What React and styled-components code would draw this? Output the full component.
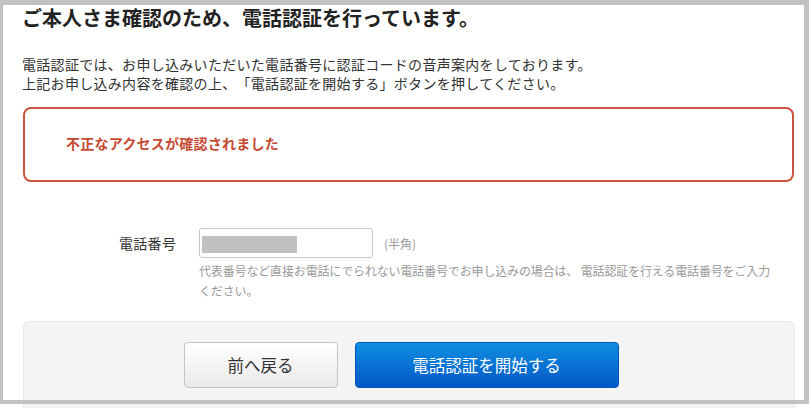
import React from "react";
import styled, { createGlobalStyle } from "styled-components";

const Global = createGlobalStyle`
  html, body { margin: 0; padding: 0; background: #fff; }
  body {
    font-family: "Noto Sans CJK JP", "Noto Sans", sans-serif;
    text-spacing-trim: space-all;
  }
  * { box-sizing: border-box; }
`;

const Page = styled.div`
  position: relative;
  width: 811px;
  height: 408px;
  overflow: hidden;
  background: #fff;
`;

const Frame = styled.div`
  position: absolute;
  left: 0;
  top: 0;
  width: 809px;
  height: 404px;
  border-style: solid;
  border-color: #c2c2c2;
  border-width: 5px 5px 4px 3px;
  pointer-events: none;
`;

const Content = styled.div`
  display: flex;
  flex-direction: column;
  padding: 5px 16px 0 22px;
  color: #333;
`;

const Title = styled.h1`
  margin: 0;
  font-size: 20px;
  line-height: 26px;
  font-weight: 700;
  color: #222;
  white-space: nowrap;
`;

const Lead = styled.p`
  margin: 24px 0 0;
  font-size: 14px;
  line-height: 19px;
  letter-spacing: 0.3px;
  color: #333;
  white-space: nowrap;
`;

const Alert = styled.div`
  margin: 14px 0 0 1px;
  width: 771px;
  height: 75px;
  border: 2px solid #c9553f;
  border-radius: 8px;
  display: flex;
  align-items: center;
  padding: 0 0 4px 41px;
`;

const AlertText = styled.span`
  font-size: 14px;
  line-height: 20px;
  font-weight: 700;
  letter-spacing: 0.25px;
  color: #c64a33;
`;

const FieldRow = styled.div`
  margin-top: 46px;
  display: grid;
  grid-template-columns: 177px auto;
`;

const Label = styled.div`
  font-size: 14px;
  line-height: 30px;
  letter-spacing: 0.3px;
  color: #333;
  padding-left: 97px;
`;

const FieldBody = styled.div`
  display: flex;
  flex-direction: column;
`;

const InputLine = styled.div`
  display: flex;
  align-items: center;
`;

const Input = styled.div`
  width: 174px;
  height: 30px;
  border: 1px solid #c8c8c8;
  border-radius: 3px;
  background: #fff;
  padding: 7px 0 0 2px;
`;

const Masked = styled.div`
  width: 95px;
  height: 17px;
  background: #c1c1c1;
`;

const Unit = styled.span`
  margin-left: 11px;
  font-size: 12px;
  color: #999;
`;

const Hint = styled.p`
  margin: 3px 0 0;
  font-size: 12px;
  line-height: 19.5px;
  letter-spacing: -0.15px;
  color: #9a9a9a;
  white-space: nowrap;
`;

const ActionPanel = styled.div`
  margin: 21px 0 0 1px;
  width: 772px;
  height: 110px;
  background: #f4f4f4;
  border: 1px solid #e9e9e9;
  border-radius: 6px;
  display: flex;
  justify-content: center;
  align-items: flex-start;
  gap: 17px;
  padding: 20px 16px 0 0;
`;

const Button = styled.button`
  height: 46px;
  width: ${(p) => p.$w}px;
  font-family: "Noto Sans CJK JP", "Noto Sans", sans-serif;
  font-size: 16.5px;
  border-radius: 4px;
  cursor: pointer;
  border: 1px solid ${(p) => (p.$primary ? "#0356b8" : "#c4c4c4")};
  color: ${(p) => (p.$primary ? "#fff" : "#333")};
  background: ${(p) =>
    p.$primary
      ? "linear-gradient(#0f8ee0, #0258c8)"
      : "linear-gradient(#ffffff, #e9e9e9)"};
`;

export default function App() {
  return (
    <Page>
      <Global />
      <Content>
        <Title>ご本人さま確認のため、電話認証を行っています。</Title>
        <Lead>
          電話認証では、お申し込みいただいた電話番号に認証コードの音声案内をしております。
          <br />
          上記お申し込み内容を確認の上、「電話認証を開始する」ボタンを押してください。
        </Lead>
        <Alert>
          <AlertText>不正なアクセスが確認されました</AlertText>
        </Alert>
        <FieldRow>
          <Label>電話番号</Label>
          <FieldBody>
            <InputLine>
              <Input>
                <Masked />
              </Input>
              <Unit>(半角)</Unit>
            </InputLine>
            <Hint>
              代表番号など直接お電話にでられない電話番号でお申し込みの場合は、 電話認証を行える電話番号をご入力
              <br />
              ください。
            </Hint>
          </FieldBody>
        </FieldRow>
        <ActionPanel>
          <Button $w={154}>前へ戻る</Button>
          <Button $w={264} $primary>
            電話認証を開始する
          </Button>
        </ActionPanel>
      </Content>
      <Frame />
    </Page>
  );
}
